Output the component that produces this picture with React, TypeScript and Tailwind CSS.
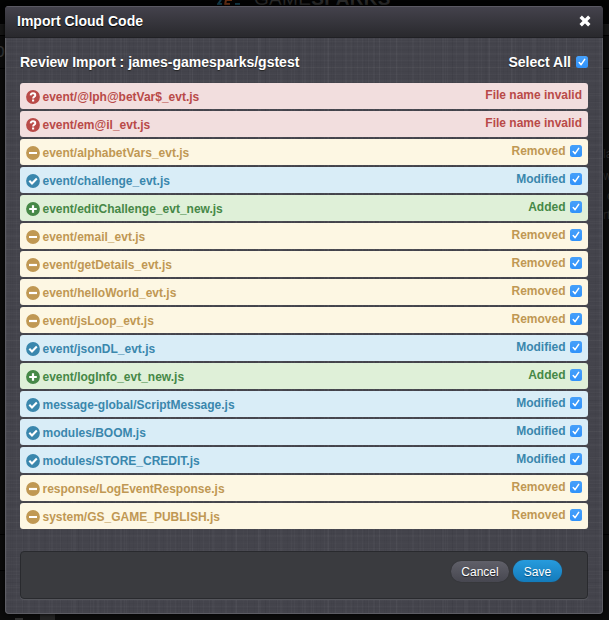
import type { ReactNode } from "react";

type Status = "invalid" | "removed" | "modified" | "added";

const styles: Record<Status, { label: string; row: string; icon: string }> = {
  invalid: { label: "File name invalid", row: "bg-[#f2dede] text-[#b94a48]", icon: "#b94a48" },
  removed: { label: "Removed", row: "bg-[#fdf7e3] text-[#c09853]", icon: "#c09853" },
  modified: { label: "Modified", row: "bg-[#d9edf7] text-[#3a87ad]", icon: "#3a87ad" },
  added: { label: "Added", row: "bg-[#dff0d8] text-[#468847]", icon: "#468847" },
};

const files: { name: string; status: Status }[] = [
  { name: "event/@lph@betVar$_evt.js", status: "invalid" },
  { name: "event/em@il_evt.js", status: "invalid" },
  { name: "event/alphabetVars_evt.js", status: "removed" },
  { name: "event/challenge_evt.js", status: "modified" },
  { name: "event/editChallenge_evt_new.js", status: "added" },
  { name: "event/email_evt.js", status: "removed" },
  { name: "event/getDetails_evt.js", status: "removed" },
  { name: "event/helloWorld_evt.js", status: "removed" },
  { name: "event/jsLoop_evt.js", status: "removed" },
  { name: "event/jsonDL_evt.js", status: "modified" },
  { name: "event/logInfo_evt_new.js", status: "added" },
  { name: "message-global/ScriptMessage.js", status: "modified" },
  { name: "modules/BOOM.js", status: "modified" },
  { name: "modules/STORE_CREDIT.js", status: "modified" },
  { name: "response/LogEventResponse.js", status: "removed" },
  { name: "system/GS_GAME_PUBLISH.js", status: "removed" },
];

const glyphs: Record<Status, ReactNode> = {
  invalid: (
    <>
      <path d="M4.6 5.4C4.8 4 5.7 3.3 7 3.3C8.4 3.3 9.3 4.1 9.3 5.2C9.3 6.7 7.1 6.6 7.1 8.5" strokeWidth="1.9" />
      <path d="M7.1 9.6V11.4" strokeWidth="2.1" />
    </>
  ),
  removed: <path d="M3 7H11" strokeWidth="2.2" />,
  modified: <path d="M3.3 6.7L6 9.4L10.8 4.6" strokeWidth="2.1" />,
  added: <path d="M3.2 7H10.8M7 3.2V10.8" strokeWidth="2.2" />,
};

function StatusIcon({ status }: { status: Status }) {
  return (
    <svg className="mt-[7px] mr-[2.5px] size-[14px] shrink-0" viewBox="0 0 14 14" fill="none" stroke="#fff">
      <circle cx="7" cy="7" r="6.9" fill={styles[status].icon} stroke="none" />
      {glyphs[status]}
    </svg>
  );
}

function Check() {
  return (
    <span className="flex size-3 shrink-0 items-center justify-center rounded-[2.5px] bg-linear-to-b from-[#46a0fa] to-[#3092fa]">
      <svg className="size-3" viewBox="0 0 12 12" fill="none" stroke="#fff" strokeWidth="1.5" strokeLinecap="round" strokeLinejoin="round">
        <path d="M3.2 6.5L5.1 8.7L8.7 3.4" />
      </svg>
    </span>
  );
}

function FileRow({ name, status }: { name: string; status: Status }) {
  const s = styles[status];
  return (
    <li className={`flex h-[26px] items-start justify-between rounded-[3px] pl-1.5 text-[12px] leading-[14px] font-bold ${s.row}`}>
      <div className="flex">
        <StatusIcon status={status} />
        <span className="mt-[7px] whitespace-nowrap">{name}</span>
      </div>
      <div className="mt-[5px] flex items-center gap-[4.5px] pr-1.5">
        <span>{s.label}</span>
        {status !== "invalid" && <Check />}
      </div>
    </li>
  );
}

function Backdrop() {
  return (
    <div className="absolute inset-0 overflow-hidden bg-[#030303]">
      <div className="absolute top-6 left-0 h-[596px] w-full border-t border-[#171717] bg-[#0b0b0b]" />
      <div className="absolute top-[25px] left-0 h-2.5 w-full bg-[#151515]" />
      <div className="absolute top-[35px] left-0 h-px w-full bg-black" />
      <div className="absolute top-[68px] left-0 h-px w-full bg-black" />
      <div className="absolute top-[534px] left-0 h-px w-full bg-black" />
      <div className="absolute top-[570px] left-0 h-px w-full bg-black" />
      <span className="absolute top-[38px] -left-[6px] text-[20px] leading-6 text-[#353535]">o</span>
      <svg className="absolute top-0 left-[217px] h-1.5 w-7" viewBox="0 0 28 6" fill="none" strokeWidth="2">
        <path d="M4 0L1 4H5M18 4H23" stroke="#123b4b" />
        <path d="M9 0L8 5M9 0H15M9 4H13" stroke="#642e13" />
      </svg>
      <div className="absolute -top-[11px] left-[254px] text-[19px] leading-[20px] tracking-[0.3px] text-[#292929]">
        GAME<b>SPARKS</b>
      </div>
      <span className="absolute top-[148px] left-[603px] text-[12px] leading-3 text-[#292929]">la</span>
      <span className="absolute top-[170px] left-[603px] text-[12px] leading-3 text-[#292929]">w</span>
      <span className="absolute top-[190px] left-[607px] text-[12px] leading-3 text-[#292929]">c</span>
      <span className="absolute top-[209px] left-[603px] text-[12px] leading-3 text-[#292929]">rt</span>
      <div className="absolute top-[614px] left-10 h-1.5 w-[15px] bg-[#242424]" />
      <div className="absolute top-[618px] left-[15px] h-0.5 w-2 bg-[#303030]" />
    </div>
  );
}

export default function App() {
  return (
    <div className="relative h-[620px] w-[609px] overflow-hidden pt-1.5 pl-[5px] font-['Liberation_Sans',Arial,sans-serif]">
      <Backdrop />
      <main className="relative flex h-[608px] w-[598px] flex-col overflow-hidden rounded-[4px] bg-[#44444c] bg-[repeating-linear-gradient(90deg,#ffffff06_0_1px,transparent_1px_7px,#00000008_7px_8px,transparent_8px_11px),repeating-linear-gradient(90deg,#ffffff06_0_1px,transparent_1px_5px,#00000008_5px_6px,transparent_6px_17px),repeating-linear-gradient(90deg,#ffffff06_0_2px,transparent_2px_23px),repeating-linear-gradient(0deg,#ffffff05_0_1px,transparent_1px_5px,#00000008_5px_6px,transparent_6px_13px),repeating-linear-gradient(0deg,#ffffff05_0_1px,transparent_1px_3px,#00000006_3px_4px,transparent_4px_7px)] shadow-[0_0_4px_#000]">
        <header className="flex h-8 shrink-0 items-center justify-between border-b border-[#202024] bg-linear-to-b from-[#45434d] to-[#29292d] pr-3 pb-0.5 pl-3 shadow-[inset_0_1px_#5b5963]">
          <h1 className="text-[14px] leading-4 font-bold text-white [text-shadow:0_1px_1px_#000]">Import Cloud Code</h1>
          <svg className="mt-px size-3" viewBox="0 0 12 12" fill="none" stroke="#fff" strokeWidth="3.4">
            <path d="M1.7 1.7L10.3 10.3M10.3 1.7L1.7 10.3" />
          </svg>
        </header>
        <section className="flex min-h-0 flex-1 flex-col rounded-b-[4px] border border-t-0 border-[#5d5d64] px-3.5">
          <div className="flex h-[45px] items-center justify-between pt-[3px] text-[14px] leading-4 font-bold text-white [text-shadow:0_1px_1px_#222]">
            <h2 className="-mt-px">Review Import : james-gamesparks/gstest</h2>
            <div className="flex items-center gap-[5px]">
              <span>Select All</span>
              <Check />
            </div>
          </div>
          <ul className="flex flex-col gap-0.5">
            {files.map((file) => (
              <FileRow key={file.name} {...file} />
            ))}
          </ul>
          <footer className="mt-[22px] flex h-12 items-start justify-end gap-1 rounded-[4px] border border-[#292a2e] bg-[#3a3b3f] pt-2 pr-[25px] text-[12px] text-white shadow-[0_1px_#55565c]">
            <button className="mt-px h-[21px] w-[58px] rounded-full bg-linear-to-b from-[#606069] to-[#474750] leading-[18px] shadow-[0_0_1px_#202024] [text-shadow:0_1px_1px_#222]">Cancel</button>
            <button className="h-[22px] w-[49px] rounded-full bg-linear-to-b from-[#279bdd] to-[#137bbb] pt-px leading-[18px] shadow-[0_0_1px_#126496] [text-shadow:0_1px_1px_#07517e]">Save</button>
          </footer>
        </section>
      </main>
    </div>
  );
}
